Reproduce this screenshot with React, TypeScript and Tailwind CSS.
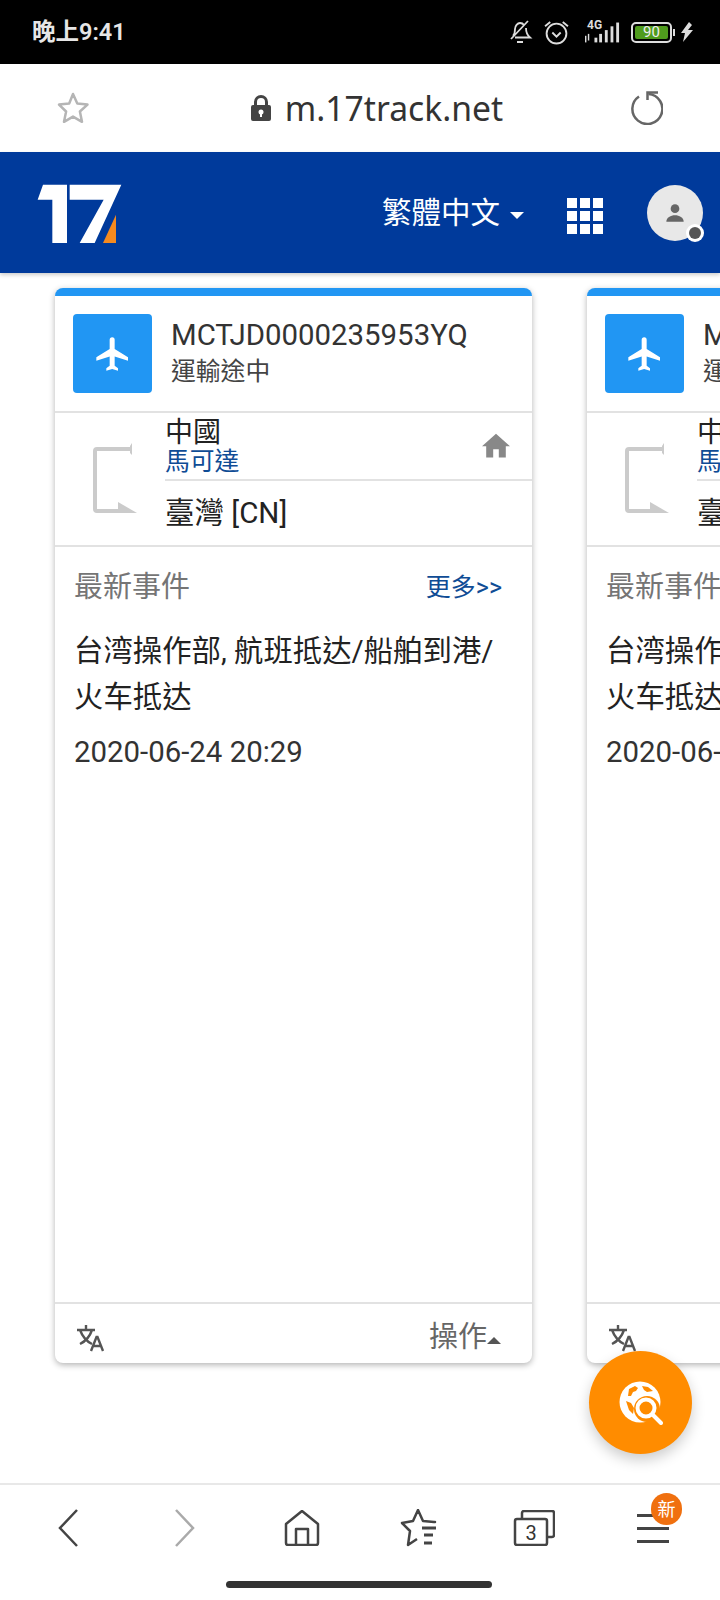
import React from "react";

const F = "[font-family:Roboto,'Noto_Sans_CJK_TC',sans-serif]";

function Logo() {
  return (
    <svg width="85" height="60" viewBox="50 68 255 180" className="shrink-0">
      <polygon fill="#fff" points="68,70 140,70 140,245 96,245 96,115 52,115" />
      <polygon fill="#fff" points="148,70 303,70 223,245 178,245 250,115 148,115" />
      <polygon fill="#f58a1f" points="287,160 287,245 248,245" />
    </svg>
  );
}

function Plane() {
  return (
    <svg width="40" height="40" viewBox="0 0 24 24" fill="#fff">
      <path d="M21 16v-2l-8-5V3.500a1.500 1.500 0 0 0-3 0V9l-8 5v2l8-2.500V19l-2 1.500V22l3.500-1 3.500 1v-1.500L13 19v-5.500z" />
    </svg>
  );
}

function RouteArrow() {
  return (
    <svg width="44" height="72" viewBox="0 0 44 72" fill="none" className="shrink-0">
      <path d="M38 6H4a2 2 0 0 0-2 2v58a2 2 0 0 0 2 2h26" stroke="#cbcbcb" strokeWidth="4" />
      <path d="M39 0v12l-2-2V3z" fill="#cbcbcb" />
      <path d="M25 59l19 11H25z" fill="#cbcbcb" />
    </svg>
  );
}

function Translate() {
  return (
    <svg width="30" height="28" viewBox="0 0 30 28" fill="none" stroke="#555" strokeWidth="2.400">
      <path d="M1 6h18M10 1v5M4 6c3 8 8 12 12 14M16 6c-2 6-6 11-12 14" />
      <path d="M15 27l5.500-14h1l5.500 14M17 22h8" />
    </svg>
  );
}

function Card() {
  return (
    <div className={`flex h-[1075px] w-[477px] shrink-0 flex-col overflow-hidden rounded-lg border-t-8 border-t-[#2196f3] bg-white shadow-[0_2px_6px_rgba(0,0,0,0.3)] ${F}`}>
      <div className="flex h-[117px] shrink-0 items-center border-b-2 border-[#e2e2e2] pl-[18px]">
        <div className="flex h-[79px] w-[79px] items-center justify-center rounded bg-[#2196f3]">
          <Plane />
        </div>
        <div className="mb-[3px] ml-[19px] flex flex-col">
          <div className="mb-[3px] text-[29.400px] leading-[36px] text-[#333]">MCTJD0000235953YQ</div>
          <div className="text-[24.800px] leading-[32px] text-[#444]">運輸途中</div>
        </div>
      </div>
      <div className="flex h-[134px] shrink-0 border-b-2 border-[#e2e2e2]">
        <div className="flex w-[110px] shrink-0 items-center justify-end pr-[28px]">
          <RouteArrow />
        </div>
        <div className="flex flex-1 flex-col">
          <div className="flex h-[68px] shrink-0 items-center justify-between border-b-2 border-[#e2e2e2] pr-[22px]">
            <div className="flex flex-col">
              <div className="text-[28px] leading-[34px] text-[#222]">中國</div>
              <div className="-mt-[3px] text-[24.800px] leading-[30px] text-[#0f4c95]">馬可達</div>
            </div>
            <svg width="28" height="26" viewBox="2 3 20 17.500" fill="#888">
              <path d="M10 20v-6h4v6h5v-8h3L12 3 2 12h3v8z" />
            </svg>
          </div>
          <div className="flex flex-1 items-center text-[29.500px] text-[#222]">臺灣 [CN]</div>
        </div>
      </div>
      <div className="flex flex-1 flex-col px-[19px]">
        <div className="flex h-[80px] shrink-0 items-center justify-between pr-[11px] pt-[2px]">
          <span className="text-[29px] text-[#757575]">最新事件</span>
          <span className="text-[25px] text-[#0f4c95]">更多&gt;&gt;</span>
        </div>
        <div className="mt-[1px] text-[29.400px] leading-[46px] text-[#222]">
          台湾操作部, 航班抵达/船舶到港/<br />火车抵达
        </div>
        <div className="mt-[9px] text-[29.400px] leading-[46px] text-[#333]">2020-06-24 20:29</div>
      </div>
      <div className="flex h-[61px] shrink-0 items-center justify-between border-t-2 border-[#e2e2e2] pl-[21px] pr-[31px] pt-[8px]">
        <Translate />
        <div className="flex items-center">
          <span className="text-[29px] text-[#666]">操作</span>
          <span className="mt-[5px] h-0 w-0 border-x-[7px] border-b-[7px] border-x-transparent border-b-[#555]" />
        </div>
      </div>
    </div>
  );
}

function StatusIcons() {
  return (
    <div className="flex items-center">
      <svg width="26" height="26" viewBox="0 0 26 24" fill="none" stroke="#ddd" strokeWidth="1.800">
        <path d="M21 1L4 19M6 16c2-2 2-4 2-7 0-3 2.500-6 5-6 2 0 3 .5 4 2M19 8c0 4 1 7 4 9.500H8M10 22h6" />
      </svg>
      <svg className="ml-[11px]" width="25" height="25" viewBox="0 0 24 24" fill="none" stroke="#ddd" strokeWidth="1.800">
        <circle cx="12" cy="13" r="9.500" />
        <path d="M8 12l4 4 4-4M1 6l5-4M23 6l-5-4" />
      </svg>
      <div className="relative ml-[16px] h-[24px] w-[35px]">
        <span className="absolute left-[2px] top-[-2px] font-['Roboto'] text-[12px] font-bold leading-[14px] text-[#ddd]">4G</span>
        <svg className="absolute inset-0" width="35" height="24" viewBox="0 0 37 24" fill="#ddd">
          <rect x="0" y="16" width="1.500" height="7" />
          <rect x="3" y="14" width="1.500" height="7" />
          <rect x="10" y="18" width="3" height="5" />
          <rect x="15" y="14" width="3" height="9" />
          <rect x="21" y="10" width="3" height="13" />
          <rect x="27" y="6" width="3" height="17" />
          <rect x="33" y="2" width="3" height="21" />
        </svg>
      </div>
      <div className="ml-[11px] flex items-center">
        <div className="flex h-[21px] w-[41px] items-center rounded-[5px] border-2 border-[#ddd] p-[2px]">
          <div className="flex h-full w-full items-center justify-center rounded-[2px] bg-[#4f9b1d] font-['Roboto'] text-[15px] leading-none text-[#eee]">90</div>
        </div>
        <div className="ml-[1px] h-[7px] w-[2px] bg-[#ddd]" />
      </div>
      <svg className="ml-[6px]" width="12" height="20" viewBox="0 0 12 20" fill="#ddd">
        <path d="M8 0L0 11h4l-2 9 10-12H7l4-5z" />
      </svg>
    </div>
  );
}

function BottomNav() {
  const item = "flex items-center justify-center";
  return (
    <div className="grid h-[117px] shrink-0 grid-cols-6 border-t-2 border-[#e8e8e8] bg-white px-[9px] pb-[55px] pt-[24px]">
      <div className={item}>
        <svg width="22" height="38" viewBox="0 0 22 38" fill="none" stroke="#444" strokeWidth="2.500"><path d="M20 1L3 19l17 18" /></svg>
      </div>
      <div className={item}>
        <svg width="22" height="38" viewBox="0 0 22 38" fill="none" stroke="#aaa" strokeWidth="2.500"><path d="M2 1l17 18L2 37" /></svg>
      </div>
      <div className={item}>
        <svg width="36" height="36" viewBox="0 0 36 36" fill="none" stroke="#444" strokeWidth="2.500" strokeLinejoin="round">
          <path d="M2 14L18 1l16 13v19a2 2 0 0 1-2 2H4a2 2 0 0 1-2-2z" />
          <path d="M12 35V19h12v16" />
        </svg>
      </div>
      <div className={item}>
        <svg width="38" height="38" viewBox="0 0 38 38" fill="none" stroke="#444" strokeWidth="2.500" strokeLinejoin="round">
          <path d="M32 13h3l-1 0-11-1-5-11-5 11-11 2 8 8-2 14 9-6" />
          <path d="M22 19h14M24 26h9M24 34h8" strokeWidth="3" />
        </svg>
      </div>
      <div className={item}>
        <svg className="mr-[4px]" width="42" height="36" viewBox="0 0 42 36" fill="none" stroke="#444" strokeWidth="2.500">
          <rect x="2" y="9" width="32" height="26" rx="2" />
          <path d="M9 9V3a2 2 0 0 1 2-2h28a2 2 0 0 1 2 2v22a2 2 0 0 1-2 2h-5" />
          <text x="18" y="30" textAnchor="middle" fontSize="20" fill="#333" stroke="none" fontFamily="Roboto">3</text>
        </svg>
      </div>
      <div className={`${item} relative`}>
        <div className="flex w-[32px] flex-col gap-[10px]">
          <div className="h-[3px] bg-[#444]" />
          <div className="h-[3px] bg-[#444]" />
          <div className="h-[3px] bg-[#444]" />
        </div>
        <div className={`absolute left-[57px] top-[-16px] flex h-[32px] w-[31px] items-center justify-center rounded-full bg-[#f0700f] text-[18px] text-white ${F}`}>新</div>
      </div>
    </div>
  );
}

export default function App() {
  return (
    <div className={`relative flex h-[1600px] w-[720px] flex-col overflow-hidden bg-white ${F}`}>
      <div className="flex h-[64px] shrink-0 items-center justify-between bg-black pl-[32px] pr-[27px]">
        <span className="pt-[1px] text-[23.500px] font-semibold text-[#e6e6e6]">晚上9:41</span>
        <StatusIcons />
      </div>

      <div className="flex h-[88px] shrink-0 items-center justify-between bg-white pl-[56px] pr-[57px]">
        <svg width="34" height="34" viewBox="0 0 34 34" fill="none" stroke="#b5b5b5" strokeWidth="2.500" strokeLinejoin="round">
          <path d="M17 3l4.300 9.500 10.200 1.100-7.600 6.900 2.100 10.300-9-5.200-9 5.200 2.100-10.300L3 13.600l10.200-1.100z" />
        </svg>
        <div className="ml-[34px] flex items-center font-['Noto_Sans'] text-[33.700px] text-[#333]">
          <svg width="22" height="26" viewBox="0 0 22 26" className="mr-[13px]">
            <path fill="#444" d="M4 10V7a7 7 0 0 1 14 0v3h1a2 2 0 0 1 2 2v12a2 2 0 0 1-2 2H3a2 2 0 0 1-2-2V12a2 2 0 0 1 2-2zm3 0h8V7a4 4 0 0 0-8 0z" />
            <circle cx="11" cy="17" r="2.500" fill="#fff" />
            <rect x="10" y="17" width="2" height="5" fill="#fff" />
          </svg>
          m.17track.net
        </div>
        <svg width="34" height="34" viewBox="0 0 34 34" fill="none" stroke="#666" strokeWidth="2.500">
          <path d="M10 5.500A15 15 0 1 0 19.500 3" />
          <path d="M29 1.500H18.500V9" />
        </svg>
      </div>

      <div className="flex h-[121px] shrink-0 items-center justify-between bg-[#003a9b] pl-[37px] pr-[17px] pt-[2px] shadow-[0_2px_4px_rgba(0,0,0,0.2)]">
        <Logo />
        <div className="flex items-center">
          <span className="text-[29.500px] text-white">繁體中文</span>
          <span className="ml-[10px] mt-[3px] h-0 w-0 border-x-[7px] border-t-[7px] border-x-transparent border-t-white" />
          <div className="ml-[43px] mt-[4px] grid grid-cols-3 gap-[3px]">
            {Array.from({ length: 9 }).map((_, i) => (
              <div key={i} className="h-[10px] w-[10px] bg-white" />
            ))}
          </div>
          <div className="relative -mt-[2px] ml-[44px] flex h-[56px] w-[56px] items-center justify-center rounded-full bg-[#e8e8e8]">
            <svg width="26" height="26" viewBox="0 0 24 24" fill="#666">
              <circle cx="12" cy="8" r="4" />
              <path d="M4 20c0-4 4-6 8-6s8 2 8 6z" />
            </svg>
            <div className="absolute -bottom-[1px] -right-[1px] flex h-[18px] w-[18px] items-center justify-center rounded-full bg-white">
              <div className="h-[12px] w-[12px] rounded-full bg-[#555]" />
            </div>
          </div>
        </div>
      </div>

      <div className="flex flex-1 gap-[55px] overflow-hidden pl-[55px] pt-[15px]">
        <Card />
        <Card />
      </div>

      <BottomNav />

      <div className="absolute left-[226px] top-[1581px] h-[7px] w-[266px] rounded-full bg-[#333]" />

      <div className="absolute left-[589px] top-[1351px] flex h-[103px] w-[103px] items-center justify-center rounded-full bg-[#ff8c00] shadow-[0_6px_14px_rgba(0,0,0,0.2)]">
        <svg width="44" height="44" viewBox="0 0 44 44">
          <circle cx="21" cy="21" r="20.500" fill="#fff" />
          <path fill="#ff8c00" d="M10 8l6-3 3 2-2 3-3 1-2 4-3 0zM23 5l6 1 5 4-6 1-3-2zM7 20l5 2 3 5-1 6-4-4z" />
          <circle cx="28" cy="28" r="13" fill="#ff8c00" />
          <circle cx="27" cy="27" r="8.500" fill="none" stroke="#fff" strokeWidth="4" />
          <path d="M33.500 33.500L42 42" stroke="#fff" strokeWidth="4" strokeLinecap="round" />
        </svg>
      </div>
    </div>
  );
}
